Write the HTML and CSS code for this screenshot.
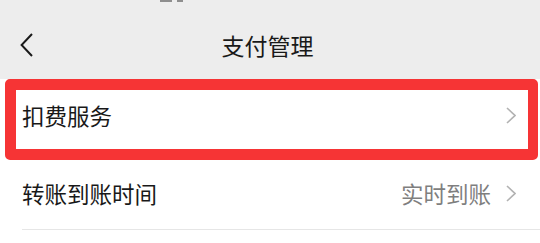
FILE: index.html
```html
<!DOCTYPE html>
<html lang="zh-CN">
<head>
    <meta charset="UTF-8">
    <meta name="viewport" content="width=device-width, initial-scale=1.0">
    <title>支付管理</title>
    <link rel="stylesheet" href="styles.css">
</head>
<body>

    <div class="top-area">
        <!-- leftover of the status bar icons -->
        <div class="status-strip">
            <span class="status-bit wide"></span>
            <span class="status-bit"></span>
        </div>

        <div class="nav-bar">
            <div class="nav-back">
                <svg width="13" height="24" viewBox="0 0 13 24">
                    <polyline points="12,1 1.6,12 12,23" fill="none" stroke="#1a1a1a" stroke-width="2"/>
                </svg>
            </div>
            <div class="nav-title">支付管理</div>
            <div></div>
        </div>
    </div>

    <div class="settings-list">
        <div class="list-row highlighted">
            <span class="row-label">扣费服务</span>
            <span class="row-right">
                <svg class="arrow" width="10" height="17" viewBox="0 0 10 17">
                    <polyline points="1,1 9,8.5 1,16" fill="none" stroke="#b2b2b2" stroke-width="1.6"/>
                </svg>
            </span>
        </div>

        <div class="list-row plain">
            <span class="row-label">转账到账时间</span>
            <span class="row-right">
                <span class="row-value">实时到账</span>
                <svg class="arrow" width="10" height="17" viewBox="0 0 10 17">
                    <polyline points="1,1 9,8.5 1,16" fill="none" stroke="#b2b2b2" stroke-width="1.6"/>
                </svg>
            </span>
        </div>
    </div>

</body>
</html>
```

FILE: styles.css
```css
body {
    margin: 0;
    padding: 0;
    font-family: "Noto Sans CJK SC", "Noto Sans", sans-serif;
    color: #191919;
    background-color: #fff;
}

/* --- Top grey area --- */
.top-area {
    background-color: #ededed;
    height: 79px;
}

.status-strip {
    height: 2px;
    display: flex;
    gap: 5px;
    padding-left: 160px;
}

.status-bit {
    width: 6px;
    height: 2px;
    background-color: #8e8e8e;
}

.status-bit.wide {
    width: 12px;
}

.nav-bar {
    height: 77px;
    box-sizing: border-box;
    padding-top: 9px;
    display: grid;
    grid-template-columns: 1fr auto 1fr;
    align-items: center;
}

.nav-back {
    padding-left: 20px;
    display: flex;
    align-items: center;
}

.nav-title {
    font-size: 23px;
    line-height: 1;
    margin-left: -5px;
}

/* --- List rows --- */
.list-row {
    display: flex;
    align-items: center;
    justify-content: space-between;
    box-sizing: border-box;
    font-size: 22.5px;
}

.list-row.highlighted {
    height: 81px;
    margin: 0 2px 0 5px;
    border: 11px solid #f63435;
    border-right-width: 10px;
    border-radius: 5px;
    padding: 0 12px 8px 6px;
}

.list-row.plain {
    height: 70px;
    margin-left: 22px;
    padding: 0 24px 3px 0;
    border-bottom: 1px solid #e6e6e6;
}

.row-label {
    line-height: 1;
}

.row-right {
    display: flex;
    align-items: center;
}

.row-value {
    color: #7f7f7f;
    line-height: 1;
    margin-right: 15px;
}

.arrow {
    display: block;
}
```
